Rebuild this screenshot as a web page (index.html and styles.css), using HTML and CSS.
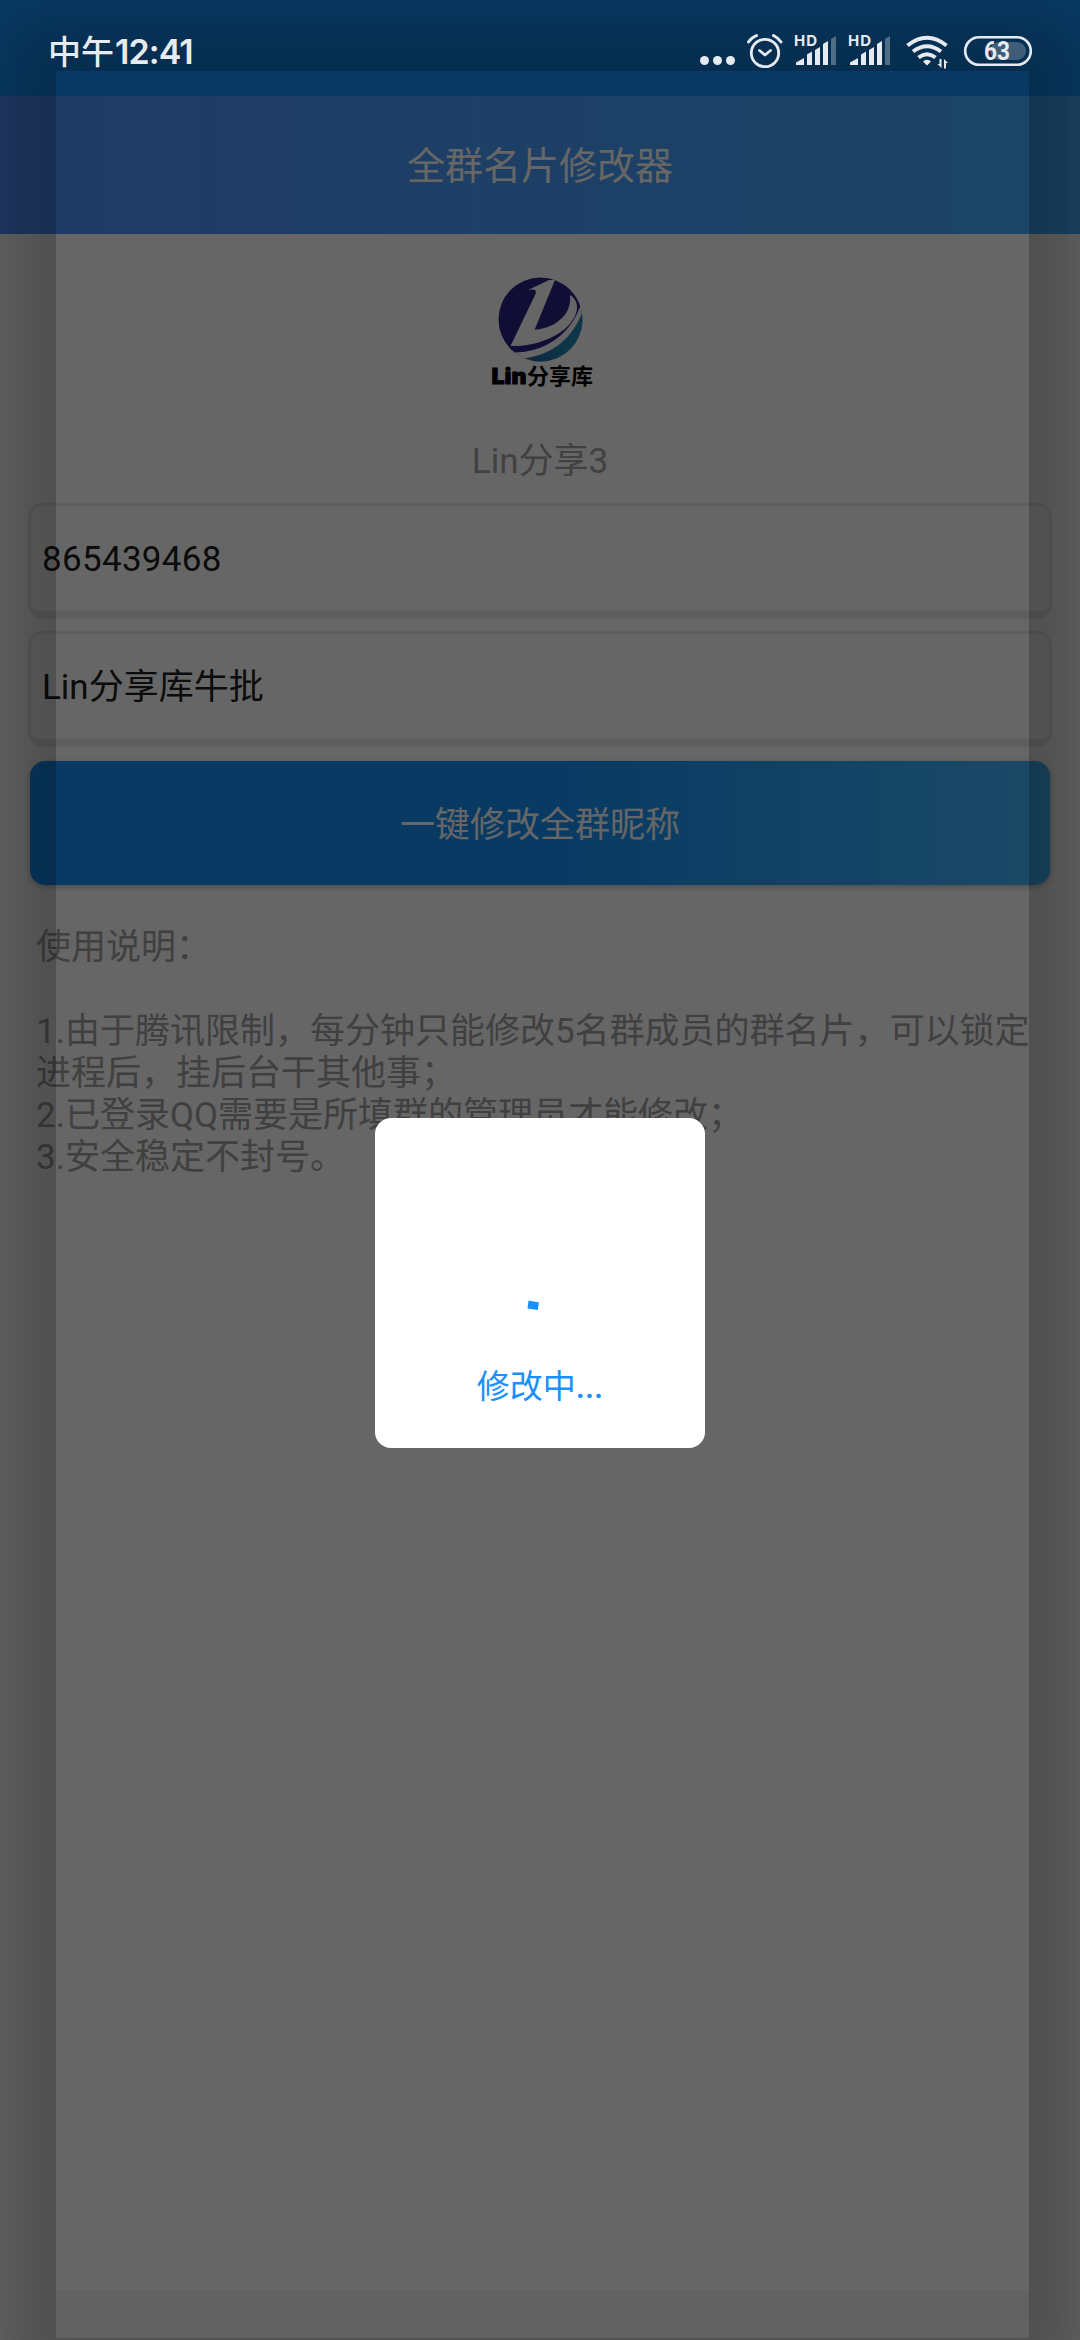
FILE: index.html
```html
<!DOCTYPE html>
<html lang="zh-CN">
<head>
<meta charset="utf-8">
<title>全群名片修改器</title>
<link rel="stylesheet" href="styles.css">
</head>
<body>
<div class="screen">
  <div class="status-bg"></div>
  <header class="app-bar">全群名片修改器</header>
  <main class="content">
    <div class="profile">
      <svg class="logo" viewBox="480 267 120 125">
        <defs>
          <clipPath id="disc"><circle cx="540.5" cy="319.500" r="42"/></clipPath>
          <linearGradient id="wave" x1="0" x2="1" y1="1" y2="0"><stop offset="0" stop-color="#1c58a0"/><stop offset=".5" stop-color="#2188b4"/></linearGradient>
        </defs>
        <g clip-path="url(#disc)">
          <rect x="495" y="274" width="92" height="92" fill="#2b2484"/>
          <path d="M508 352C535 355 569 341 581 304L590 306V370H505Z" fill="#fff"/>
          <path d="M521 359C548 356 572 342 583 310L590 370H520Z" fill="url(#wave)"/>
        </g>
        <path d="M549 280L527 290.500C533 289 536 289 536 293L510.500 346C535 347 562 336 572 321C580 310 578 300 570 295C571 308 566 316 556 323C548 328 540 329 534.500 330L555 280Z" fill="#fff"/>
        <text x="491.500" y="383.500" class="logo-latin" textLength="35" lengthAdjust="spacingAndGlyphs">Lin</text>
        <text x="527" y="383.500" class="logo-han" textLength="66" lengthAdjust="spacingAndGlyphs">分享库</text>
      </svg>
      <div class="nickname">Lin分享3</div>
    </div>
    <div class="field number">865439468</div>
    <div class="field">Lin分享库牛批</div>
    <div class="submit">一键修改全群昵称</div>
    <section class="notes">
      <p>使用说明：</p>
      <p class="gap"></p>
      <p>1.由于腾讯限制，每分钟只能修改5名群成员的群名片，可以锁定<br>进程后，挂后台干其他事；</p>
      <p>2.已登录QQ需要是所填群的管理员才能修改；</p>
      <p>3.安全稳定不封号。</p>
    </section>
  </main>
  <div class="scrim"><div class="window-shadow"><div class="window-foot"></div></div></div>

  <div class="status-bar">
    <div class="clock">中午<span class="time">12:41</span></div>
    <div class="status-icons">
      <svg width="40" height="40" viewBox="700 32 40 40"><circle cx="704.500" cy="60.500" r="4.500"/><circle cx="717.500" cy="60.500" r="4.500"/><circle cx="730.500" cy="60.500" r="4.500"/></svg>
      <svg width="50" height="40" viewBox="740 32 50 40" class="line"><circle cx="765" cy="53" r="13.700" stroke-width="2.800"/><path d="M759.500 50.500L765 55L770.500 50.500" stroke-width="2.800"/><path d="M748.500 42Q751 38 756.500 35.500M781 42Q778.500 38 773.500 35.500" stroke-width="3"/></svg>
      <svg width="54" height="40" viewBox="790 32 54 40"><text x="794" y="46" class="hd" textLength="23">HD</text><path d="M796 65V62.500L804 58V65ZM807 65V54.500L812 51.500V65ZM815 65V50L820 47V65ZM823 65V44L828 41V65Z"/><path d="M831 65V39L836 36V65Z" opacity=".33"/></svg>
      <svg width="54" height="40" viewBox="790 32 54 40"><text x="794" y="46" class="hd" textLength="23">HD</text><path d="M796 65V62.500L804 58V65ZM807 65V54.500L812 51.500V65ZM815 65V50L820 47V65ZM823 65V44L828 41V65Z"/><path d="M831 65V39L836 36V65Z" opacity=".33"/></svg>
      <svg width="58" height="40" viewBox="898 32 58 40"><g class="wifi"><path d="M907.500 45.500Q927 30 946.500 45.500M913 51.500Q927 41 941 51.500M918.500 57.500Q927 51 935.500 57.500"/></g><path d="M924 61.500Q927 59.500 930 61.500L927 64.500Z" stroke="#e6ebf1" stroke-width="1.500" stroke-linejoin="round"/><path d="M941.500 59V68L937.500 64H939.500V59ZM944 68.500V59L948 63H946V68.500Z"/></svg>
      <svg width="80" height="40" viewBox="956 32 80 40"><rect x="990" y="42" width="36" height="18" rx="9" opacity=".25"/><rect x="965.200" y="37.200" width="65.600" height="27.600" rx="13.800" fill="none" stroke="#e6ebf1" stroke-width="2.600"/><text x="984" y="60" class="charge" textLength="26" lengthAdjust="spacingAndGlyphs">63</text></svg>
    </div>
  </div>

  <div class="dialog">
    <svg class="spinner" width="16" height="14" viewBox="0 0 16 14"><path d="M3.500 1.500L14 3.500L12.800 11L2.500 9.500Z" fill="#1890ff"/></svg>
    <div class="dialog-text">修改中<span class="dots">...</span></div>
  </div>
</div>
</body>
</html>
```

FILE: styles.css
```css
* { box-sizing: border-box; }
body { margin: 0; font-family: Roboto, "Noto Sans CJK SC", sans-serif; }
p { margin: 0; }
svg { display: block; flex: none; }

.screen {
  position: relative;
  width: 1080px;
  height: 2340px;
  overflow: hidden;
  background: #fff;
}
.status-bg { height: 96px; background: #1491fa; }
.app-bar {
  height: 138px;
  padding-bottom: 5px;
  display: flex;
  align-items: center;
  justify-content: center;
  color: #fff;
  font-size: 38px;
  background: linear-gradient(90deg, #5090ff, #44adff);
}
.content { padding: 33px 28px 0; }
.profile { display: flex; flex-direction: column; align-items: center; height: 236px; }
.logo { width: 120px; height: 125px; }
.logo-latin { font: 900 21px Inter, sans-serif; stroke: #000; stroke-width: .8; }
.logo-han { font: 700 22px "Noto Sans CJK SC", sans-serif; }
.nickname { margin-top: 49px; height: 42px; line-height: 42px; font-size: 35px; color: #a3a3a3; }

.field {
  height: 116px;
  margin-bottom: 12px;
  padding: 0 11px;
  border: solid #ececec;
  border-width: 3px 3px 8px;
  border-radius: 15px;
  line-height: 107px;
  font-size: 35px;
  color: #202020;
}
.number { letter-spacing: .3px; }
.submit {
  height: 124px;
  margin: 14px 2px 0;
  border-radius: 15px;
  line-height: 129px;
  text-align: center;
  color: #fff;
  font-size: 35px;
  background: linear-gradient(90deg, #1491fa 50%, #44b9ff);
  box-shadow: 0 2px 6px rgba(0, 0, 0, .25);
}
.notes {
  padding: 42px 0 0 8px;
  font-size: 35px;
  line-height: 42px;
  color: #a0a0a0;
  white-space: nowrap;
}
.notes .gap { height: 42px; }

.scrim { position: absolute; inset: 0; background: rgba(0, 0, 0, .6); }
.window-shadow {
  position: absolute;
  left: 56px;
  top: 71px;
  width: 973px;
  height: 2267px;
  display: flex;
  align-items: flex-end;
  box-shadow: 0 0 60px 52px rgba(0, 0, 0, .22);
}
.window-foot { width: 100%; height: 48px; background: rgba(0, 0, 0, .035); }

.status-bar {
  position: absolute;
  inset: 0 0 auto;
  height: 96px;
  padding: 32px 44px 24px 48px;
  display: flex;
  justify-content: space-between;
  color: #e6ebf1;
  fill: #e6ebf1;
}
.clock { font: 500 33px/40px Roboto, "Noto Sans CJK SC", sans-serif; white-space: nowrap; }
.time { margin-left: 1px; font: 600 34px/40px Inter, sans-serif; letter-spacing: -.9px; }
.status-icons { display: flex; }
.line, .wifi { fill: none; stroke: #e6ebf1; stroke-linecap: round; stroke-linejoin: round; }
.wifi { stroke-width: 4px; stroke-linecap: butt; }
.hd { font: 700 15px Inter, sans-serif; }
.charge { font: 700 25px Roboto, sans-serif; }

.dialog {
  position: absolute;
  left: 375px;
  top: 1118px;
  width: 330px;
  height: 330px;
  border-radius: 16px;
  background: #fff;
  display: flex;
  flex-direction: column;
  align-items: center;
}
.spinner { margin: 181px 14px 0 0; }
.dialog-text { margin-top: 54px; line-height: 40px; font-size: 33px; color: #1890ff; }
.dots { font-weight: 500; }
```
